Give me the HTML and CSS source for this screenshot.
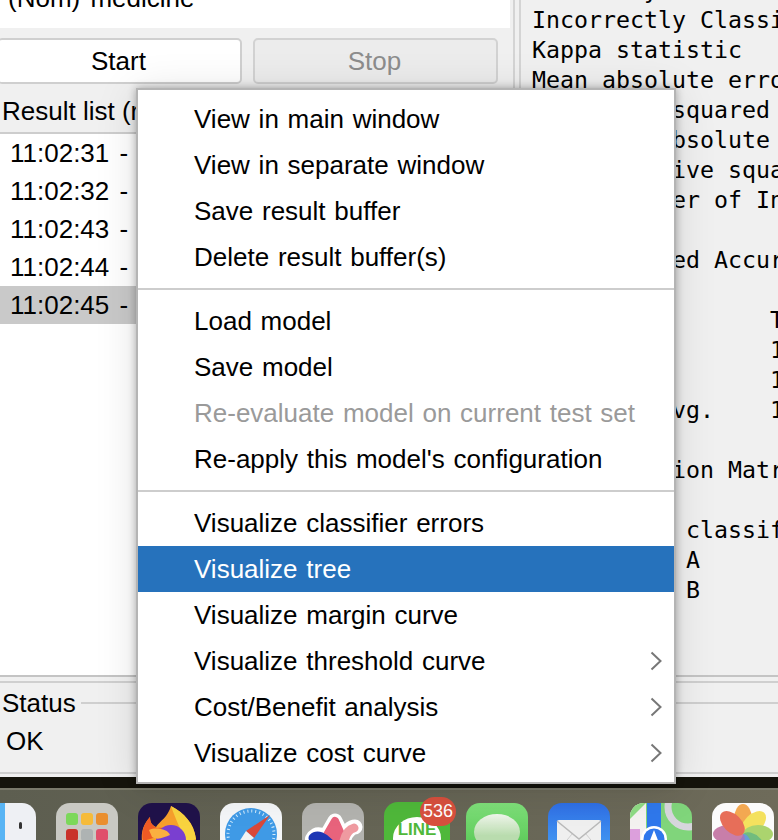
FILE: index.html
```html
<!DOCTYPE html>
<html lang="en">
<head>
<meta charset="utf-8">
<title>Weka Explorer - Classify</title>
<link rel="stylesheet" href="styles.css">
</head>
<body>
<div class="screen">
  <div class="window">
    <div class="main">
      <section class="left">
        <div class="attr-box"><span class="attr-text">(Nom) medicine</span></div>
        <div class="buttons">
          <button class="btn">Start</button>
          <button class="btn btn-off">Stop</button>
        </div>
        <div class="list-title">Result list (right-click for options)</div>
        <ul class="results">
          <li class="result">11:02:31 - trees.J48</li>
          <li class="result">11:02:32 - trees.J48</li>
          <li class="result">11:02:43 - trees.J48</li>
          <li class="result">11:02:44 - trees.J48</li>
          <li class="result result-on">11:02:45 - trees.J48</li>
        </ul>
      </section>
      <pre class="output">Correctly Classified Instances
Incorrectly Classified Instances
Kappa statistic
Mean absolute error
Root mean squared error
Relative absolute error
Root relative squared error
Total Number of Instances

=== Detailed Accuracy By Class ===

                 TP Rate
                 1.000
                 1.000
Weighted Avg.    1.000

=== Confusion Matrix ===

  a  b &lt;-- classified as
           A
           B</pre>
    </div>
    <div class="rule-pair"></div>
    <div class="status">
      <div class="status-head"><span>Status</span><i class="status-line"></i></div>
      <div class="status-text">OK</div>
    </div>
  </div>
  <div class="wallpaper"></div>
  <div class="dock">
    <svg class="icon" viewBox="0 0 62 62"><rect width="62" height="62" rx="14" fill="#eef0f4"/><path d="M14 0H31V62H14C6 62 0 56 0 48V14C0 6 6 0 14 0Z" fill="#58b4f4"/><rect x="45" y="19" width="3" height="7" rx="1.5" fill="#333"/></svg>
    <svg class="icon" viewBox="0 0 62 62"><rect width="62" height="62" rx="14" fill="#c9c9c3"/><rect x="10" y="10" width="12" height="12" rx="3" fill="#7cd85a"/><rect x="25" y="10" width="12" height="12" rx="3" fill="#f6bb3a"/><rect x="40" y="10" width="12" height="12" rx="3" fill="#ea8f2f"/><rect x="10" y="26" width="12" height="12" rx="3" fill="#c9322a"/><rect x="25" y="26" width="12" height="12" rx="3" fill="#aeb3b3"/><rect x="40" y="26" width="12" height="12" rx="3" fill="#e04f6b"/></svg>
    <svg class="icon" viewBox="0 0 62 62"><rect width="62" height="62" rx="14" fill="#20124a"/><path d="M33 3C46 10 56 20 58 36C59 50 50 60 32 60C20 60 8 52 4 38C3 30 5 22 12 14C12 20 14 22 18 24C22 18 30 14 33 3Z" fill="#f7a02c"/><path d="M33 3C46 10 56 20 58 36L48 40C44 28 38 18 33 3Z" fill="#f9d33f"/><path d="M5 38C3 30 5 22 12 14C12 20 14 22 19 25C26 24 30 26 30 30L12 36Z" fill="#ee5a24"/><circle cx="33" cy="37" r="15" fill="#7a3fd0"/><path d="M11 27C18 24 30 26 32 32C26 34 20 38 14 34Z" fill="#fbb040"/></svg>
    <svg class="icon" viewBox="0 0 62 62"><rect width="62" height="62" rx="14" fill="#f4f6f8"/><circle cx="31" cy="31" r="26" fill="#3f9ae6"/><circle cx="31" cy="31" r="23" fill="none" stroke="#d6ecfb" stroke-width="3" stroke-dasharray="1 3"/><path d="M50 12L26 28L34 35Z" fill="#d9483a"/><path d="M26 28L34 35L12 50Z" fill="#f2f2f2"/></svg>
    <svg class="icon" viewBox="0 0 62 62"><rect width="62" height="62" rx="14" fill="#b3b3af"/><path d="M10 36C14 28 22 30 30 42" fill="none" stroke="#fff" stroke-width="14" stroke-linecap="round"/><path d="M18 44L33 18L42 36C44 28 50 24 53 24" fill="none" stroke="#fff" stroke-width="15" stroke-linecap="round" stroke-linejoin="round"/><path d="M33 18L42 38L18 44Z" fill="#e8637c" stroke="#e8637c" stroke-width="8" stroke-linejoin="round"/><path d="M42 38C44 30 48 26 52 25" fill="none" stroke="#ef9aa0" stroke-width="9" stroke-linecap="round"/><path d="M11 35C15 31 22 33 30 43" fill="none" stroke="#1d36b4" stroke-width="9" stroke-linecap="round"/></svg>
    <div class="icon-line">
      <svg class="icon-line-art" viewBox="0 0 66 62"><rect width="66" height="62" rx="14" fill="#4fb83a"/><ellipse cx="33" cy="36" rx="24" ry="21" fill="#fff"/></svg>
      <span class="line-word">LINE</span>
      <span class="badge">536</span>
    </div>
    <svg class="icon" viewBox="0 0 62 62"><defs><linearGradient id="msg" x1="0" y1="0" x2="0" y2="1"><stop offset="0" stop-color="#7fe07a"/><stop offset="1" stop-color="#4cc04a"/></linearGradient><linearGradient id="bub" x1="0" y1="0" x2="0" y2="1"><stop offset="0" stop-color="#f0f6ec"/><stop offset=".6" stop-color="#b9dcae"/></linearGradient></defs><rect width="62" height="62" rx="14" fill="url(#msg)"/><ellipse cx="31" cy="29" rx="23" ry="18" fill="url(#bub)"/></svg>
    <svg class="icon" viewBox="0 0 62 62"><defs><linearGradient id="mail" x1="0" y1="0" x2="0" y2="1"><stop offset="0" stop-color="#2f6fe6"/><stop offset="1" stop-color="#4aa8f6"/></linearGradient></defs><rect width="62" height="62" rx="14" fill="url(#mail)"/><rect x="9" y="17" width="44" height="32" rx="2" fill="#efefef"/><path d="M9 18L31 36L53 18" fill="none" stroke="#b9b9b9" stroke-width="1.5"/><path d="M10 48L24 31M52 48L38 31" fill="none" stroke="#cfcfcf" stroke-width="1"/></svg>
    <svg class="icon" viewBox="0 0 62 62"><defs><clipPath id="mapclip"><rect width="62" height="62" rx="14"/></clipPath></defs><g clip-path="url(#mapclip)"><rect width="62" height="62" fill="#80d57b"/><path d="M0 0H16V62H0Z" fill="#f4f2f0"/><path d="M0 16L16 0H0Z" fill="#8edb84"/><path d="M0 26H10V62H0Z" fill="#dc9fdc"/><circle cx="58" cy="4" r="20" fill="none" stroke="#d6d6dc" stroke-width="7"/><rect x="17" y="0" width="14" height="62" fill="#2f78ec"/><circle cx="24" cy="36" r="13" fill="#fff"/><circle cx="24" cy="36" r="10.5" fill="#2f78ec"/><path d="M24 27L29 40L24 37L19 40Z" fill="#fff"/></g></svg>
    <svg class="icon" viewBox="0 0 62 62"><rect width="62" height="62" rx="14" fill="#fbfbfb"/><g opacity=".86"><ellipse cx="31" cy="16" rx="9" ry="15" fill="#f29b36"/><ellipse cx="31" cy="16" rx="9" ry="15" fill="#f4dd45" transform="rotate(45 31 31)"/><ellipse cx="31" cy="16" rx="9" ry="15" fill="#9fce58" transform="rotate(90 31 31)"/><ellipse cx="31" cy="16" rx="9" ry="15" fill="#5bb26a" transform="rotate(135 31 31)"/><ellipse cx="31" cy="16" rx="9" ry="15" fill="#4e8fd0" transform="rotate(180 31 31)"/><ellipse cx="31" cy="16" rx="9" ry="15" fill="#8e64b8" transform="rotate(225 31 31)"/><ellipse cx="31" cy="16" rx="9" ry="15" fill="#c06a9c" transform="rotate(270 31 31)"/><ellipse cx="31" cy="16" rx="9" ry="15" fill="#e4573f" transform="rotate(315 31 31)"/></g></svg>
  </div>

  <div class="menu">
    <div class="item">View in main window</div>
    <div class="item">View in separate window</div>
    <div class="item">Save result buffer</div>
    <div class="item">Delete result buffer(s)</div>
    <div class="sep"></div>
    <div class="item">Load model</div>
    <div class="item">Save model</div>
    <div class="item item-off">Re-evaluate model on current test set</div>
    <div class="item">Re-apply this model's configuration</div>
    <div class="sep"></div>
    <div class="item">Visualize classifier errors</div>
    <div class="item item-on">Visualize tree</div>
    <div class="item">Visualize margin curve</div>
    <div class="item">Visualize threshold curve<svg class="chev" viewBox="0 0 12 20"><path d="M1.5 1.5L10.5 10L1.5 18.5"/></svg></div>
    <div class="item">Cost/Benefit analysis<svg class="chev" viewBox="0 0 12 20"><path d="M1.5 1.5L10.5 10L1.5 18.5"/></svg></div>
    <div class="item">Visualize cost curve<svg class="chev" viewBox="0 0 12 20"><path d="M1.5 1.5L10.5 10L1.5 18.5"/></svg></div>
  </div>
</div>
</body>
</html>
```
FILE: styles.css
```css
* { box-sizing: border-box; }
html, body { margin: 0; padding: 0; }
body { font-family: "Liberation Sans", Arial, sans-serif; background: #1a1a10; overflow: hidden; }
.screen { position: relative; width: 778px; height: 840px; overflow: hidden; display: flex; flex-direction: column; }

.window { height: 777px; flex: none; background: #f0f0f0; display: flex; flex-direction: column; }
.main { height: 675px; flex: none; display: flex; overflow: hidden; }

.left { width: 515px; flex: none; display: flex; flex-direction: column; border-right: 2px solid #d4d4d4; }
.attr-box { width: 510px; height: 28px; flex: none; background: #fff; position: relative; overflow: hidden; font-size: 26px; word-spacing: 3px; }
.attr-text { display: block; margin-top: -17px; padding-left: 8px; line-height: 30px; }

.buttons { display: flex; gap: 11px; margin: 10px 0 0 -3px; width: 501px; flex: none; }
.btn { flex: 1; height: 46px; font: 26px "Liberation Sans", Arial, sans-serif; color: #000; background: #fff; border: 2px solid #cfcfcf; border-radius: 5px; padding: 0 2px 0 0; }
.btn-off { color: #8d8d8d; background: #ececec; border-color: #d2d2d2; }

.list-title { height: 50px; flex: none; font-size: 26px; line-height: 54px; padding-left: 2px; white-space: nowrap; overflow: hidden; border-bottom: 2px solid #cdcdcd; }
.results { flex: 1; margin: 0; padding: 0; list-style: none; background: #fff; }
.result { height: 38px; line-height: 38px; font-size: 26px; padding-left: 10px; word-spacing: 3px; white-space: nowrap; overflow: hidden; }
.result-on { background: #c9c9c9; }

.output { flex: 1; margin: -25px 0 0 4px; padding: 0 0 0 11px; border-left: 2px solid #d4d4d4; font: 23.25px/30px "DejaVu Sans Mono", "Liberation Mono", monospace; color: #000; overflow: hidden; white-space: pre; }

.rule-pair { height: 8px; flex: none; border-top: 2px solid #c4c4c4; border-bottom: 2px solid #cfcfcf; }
.status { flex: 1; display: flex; flex-direction: column; border-bottom: 2px solid #cfcfcf; margin-bottom: 3px; }
.status-head { height: 28px; margin-top: 6px; padding-left: 2px; display: flex; align-items: center; gap: 5px; font-size: 26px; }
.status-line { flex: 1; height: 2px; background: #cfcfcf; }
.status-text { padding-left: 6px; margin-top: 9px; font-size: 26px; line-height: 30px; }

.wallpaper { height: 11px; flex: none; background: #15140c; }
.dock { flex: 1; display: flex; gap: 20px; padding: 13px 0 0; margin: 0; background: linear-gradient(90deg, #5d5e50, #6e6b5a); border-top: 2px solid #7a7a6b; overflow: hidden; }
.icon { width: 62px; height: 62px; flex: none; display: block; }
.icon:first-child { margin-left: -26px; }

.icon-line { position: relative; width: 66px; height: 62px; flex: none; margin: -1px -4px 0 0; }
.icon-line-art { width: 66px; height: 62px; display: block; }
.line-word { position: absolute; left: 0; right: 0; top: 18px; text-align: center; font-size: 17px; font-weight: 700; color: #4fb83a; }
.badge { position: absolute; left: 36px; top: -5px; width: 36px; height: 29px; border-radius: 15px; background: #d8503e; color: #fff; font-size: 18px; line-height: 29px; text-align: center; }

.menu { position: absolute; left: 136px; top: 88px; width: 540px; height: 696px; padding: 6px 0; background: #fff; border: 2px solid #b4b4b4; box-shadow: 0 0 8px rgba(0, 0, 0, .3), 0 4px 40px rgba(0, 0, 0, .12); }
.item { height: 46px; line-height: 46px; padding: 0 12px 0 56px; font-size: 26px; word-spacing: 1.5px; color: #000; display: flex; align-items: center; justify-content: space-between; white-space: nowrap; }
.item-off { color: #9a9a9a; }
.item-on { background: #2672bc; color: #fff; }
.sep { height: 2px; margin: 8px 0; background: #cdcdcd; }
.chev { width: 12px; height: 20px; flex: none; fill: none; stroke: #777; stroke-width: 2; }
```
